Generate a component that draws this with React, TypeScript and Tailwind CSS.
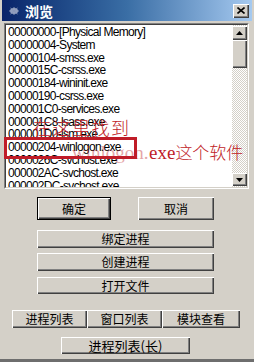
import React from "react";

const rows = [
  "00000000-[Physical Memory]",
  "00000004-System",
  "00000104-smss.exe",
  "0000015C-csrss.exe",
  "00000184-wininit.exe",
  "00000190-csrss.exe",
  "000001C0-services.exe",
  "000001C8-lsass.exe",
  "000001D0-lsm.exe",
  "00000204-winlogon.exe",
  "0000026C-svchost.exe",
  "000002AC-svchost.exe",
  "000002DC-svchost.exe",
];

const raised =
  "shadow-[inset_1px_1px_#ffffff,inset_-1px_-1px_#404040,inset_-2px_-2px_#808080] bg-[#d4d0c8]";

function Btn({ label, className }: { label: string; className: string }) {
  return (
    <div
      className={`${raised} flex items-center justify-center text-[12px] leading-none text-black ${className}`}
    >
      {label}
    </div>
  );
}

export default function App() {
  return (
    <div
      className="relative w-[254px] h-[362px] overflow-hidden bg-[#d4d0c8] flex flex-col px-[2px] border-b-[3px] border-b-[#6e6e6e]"
      style={{ fontFamily: '"Noto Sans CJK SC", "Liberation Sans", sans-serif' }}
    >
      {/* Title bar */}
      <div className="h-[21px] flex items-center bg-gradient-to-r from-[#0a246a] via-[#3a6ea5] to-[#a6caf0] pl-[6px] pr-[3px]">
        <svg width="12" height="10" viewBox="0 0 12 10" className="mr-[5px]">
          <ellipse cx="6" cy="5" rx="4" ry="3" fill="#9aa6c4" />
          <path d="M1 5 H11 M6 1 V9 M2.5 2 L9.5 8 M9.5 2 L2.5 8" stroke="#8c98b8" strokeWidth="1" />
        </svg>
        <span className="text-white font-bold text-[14px] leading-none">浏览</span>
        <div className={`ml-auto w-[16px] h-[14px] ${raised} flex items-center justify-center`}>
          <svg width="8" height="7" viewBox="0 0 8 7">
            <path d="M0.5 0.5 L7.5 6.5 M7.5 0.5 L0.5 6.5" stroke="#000" strokeWidth="1.6" />
          </svg>
        </div>
      </div>

      {/* List box */}
      <div className="mt-[2px] ml-[2px] mr-[3px] h-[166px] border border-t-[#808080] border-l-[#808080] border-r-white border-b-white">
        <div className="h-full border border-t-[#404040] border-l-[#404040] border-r-[#d4d0c8] border-b-[#d4d0c8] flex">
          <div
            className="flex-1 bg-white overflow-hidden pl-[2px] pt-[1px] text-[12px] leading-[12.8px] tracking-[-0.7px] text-black"
            style={{ fontFamily: '"Liberation Sans", Arial, sans-serif' }}
          >
            {rows.map((r) => (
              <div key={r} className="whitespace-nowrap">
                {r}
              </div>
            ))}
          </div>
          <div className="w-[15px] flex flex-col bg-[repeating-conic-gradient(#d4d0c8_0_25%,#ffffff_0_50%)] bg-[length:2px_2px]">
            <div className={`h-[14px] mt-[1px] ${raised} flex items-center justify-center`}>
              <svg width="7" height="4" viewBox="0 0 7 4">
                <path d="M3.5 0 L7 4 L0 4 Z" fill="#000" />
              </svg>
            </div>
            <div className={`h-[28px] ${raised}`} />
            <div className="flex-1" />
            <div className={`h-[13px] mb-[1px] ${raised} flex items-center justify-center`}>
              <svg width="7" height="4" viewBox="0 0 7 4">
                <path d="M0 0 L7 0 L3.5 4 Z" fill="#000" />
              </svg>
            </div>
          </div>
        </div>
      </div>

      {/* Buttons */}
      <div className="flex mt-[8px] pl-[35px] gap-[27px]">
        <div className="w-[74px] h-[23px] border border-black flex">
          <Btn label="确定" className="flex-1" />
        </div>
        <Btn label="取消" className="w-[76px] h-[23px]" />
      </div>
      <div className="pl-[35px] flex flex-col">
        <Btn label="绑定进程" className="mt-[10px] w-[177px] h-[18px]" />
        <Btn label="创建进程" className="mt-[5px] w-[177px] h-[18px]" />
        <Btn label="打开文件" className="mt-[6px] w-[177px] h-[17px]" />
      </div>
      <div className="flex mt-[16px] pl-[10px]">
        <Btn label="进程列表" className="w-[75px] h-[18px]" />
        <Btn label="窗口列表" className="w-[75px] h-[18px]" />
        <Btn label="模块查看" className="w-[78px] h-[18px]" />
      </div>
      <div className="flex mt-[9px] pl-[59px]">
        <Btn label="进程列表(长)" className="w-[129px] h-[17px] text-[13px]" />
      </div>

      {/* Annotation overlay */}
      <div className="absolute left-[4px] top-[137px] w-[133px] h-[22px] border-[3px] border-[#c01c28]" />
      <span className="absolute left-[33px] top-[118px] text-[18px] font-light leading-none tracking-[1.5px] text-[#c01c28] whitespace-nowrap">
        在这里找到
      </span>
      <span
        className="absolute left-[72px] top-[143px] text-[19px] leading-none text-[#c01c28] opacity-40 whitespace-nowrap"
        style={{ fontFamily: '"Liberation Serif", serif' }}
      >
        winlogon.
      </span>
      <span className="absolute left-[149px] top-[143px] text-[17px] font-light leading-none text-[#c01c28] whitespace-nowrap">
        <span style={{ fontFamily: '"Liberation Serif", serif' }} className="text-[19px]">
          exe
        </span>
        这个软件
      </span>
    </div>
  );
}
